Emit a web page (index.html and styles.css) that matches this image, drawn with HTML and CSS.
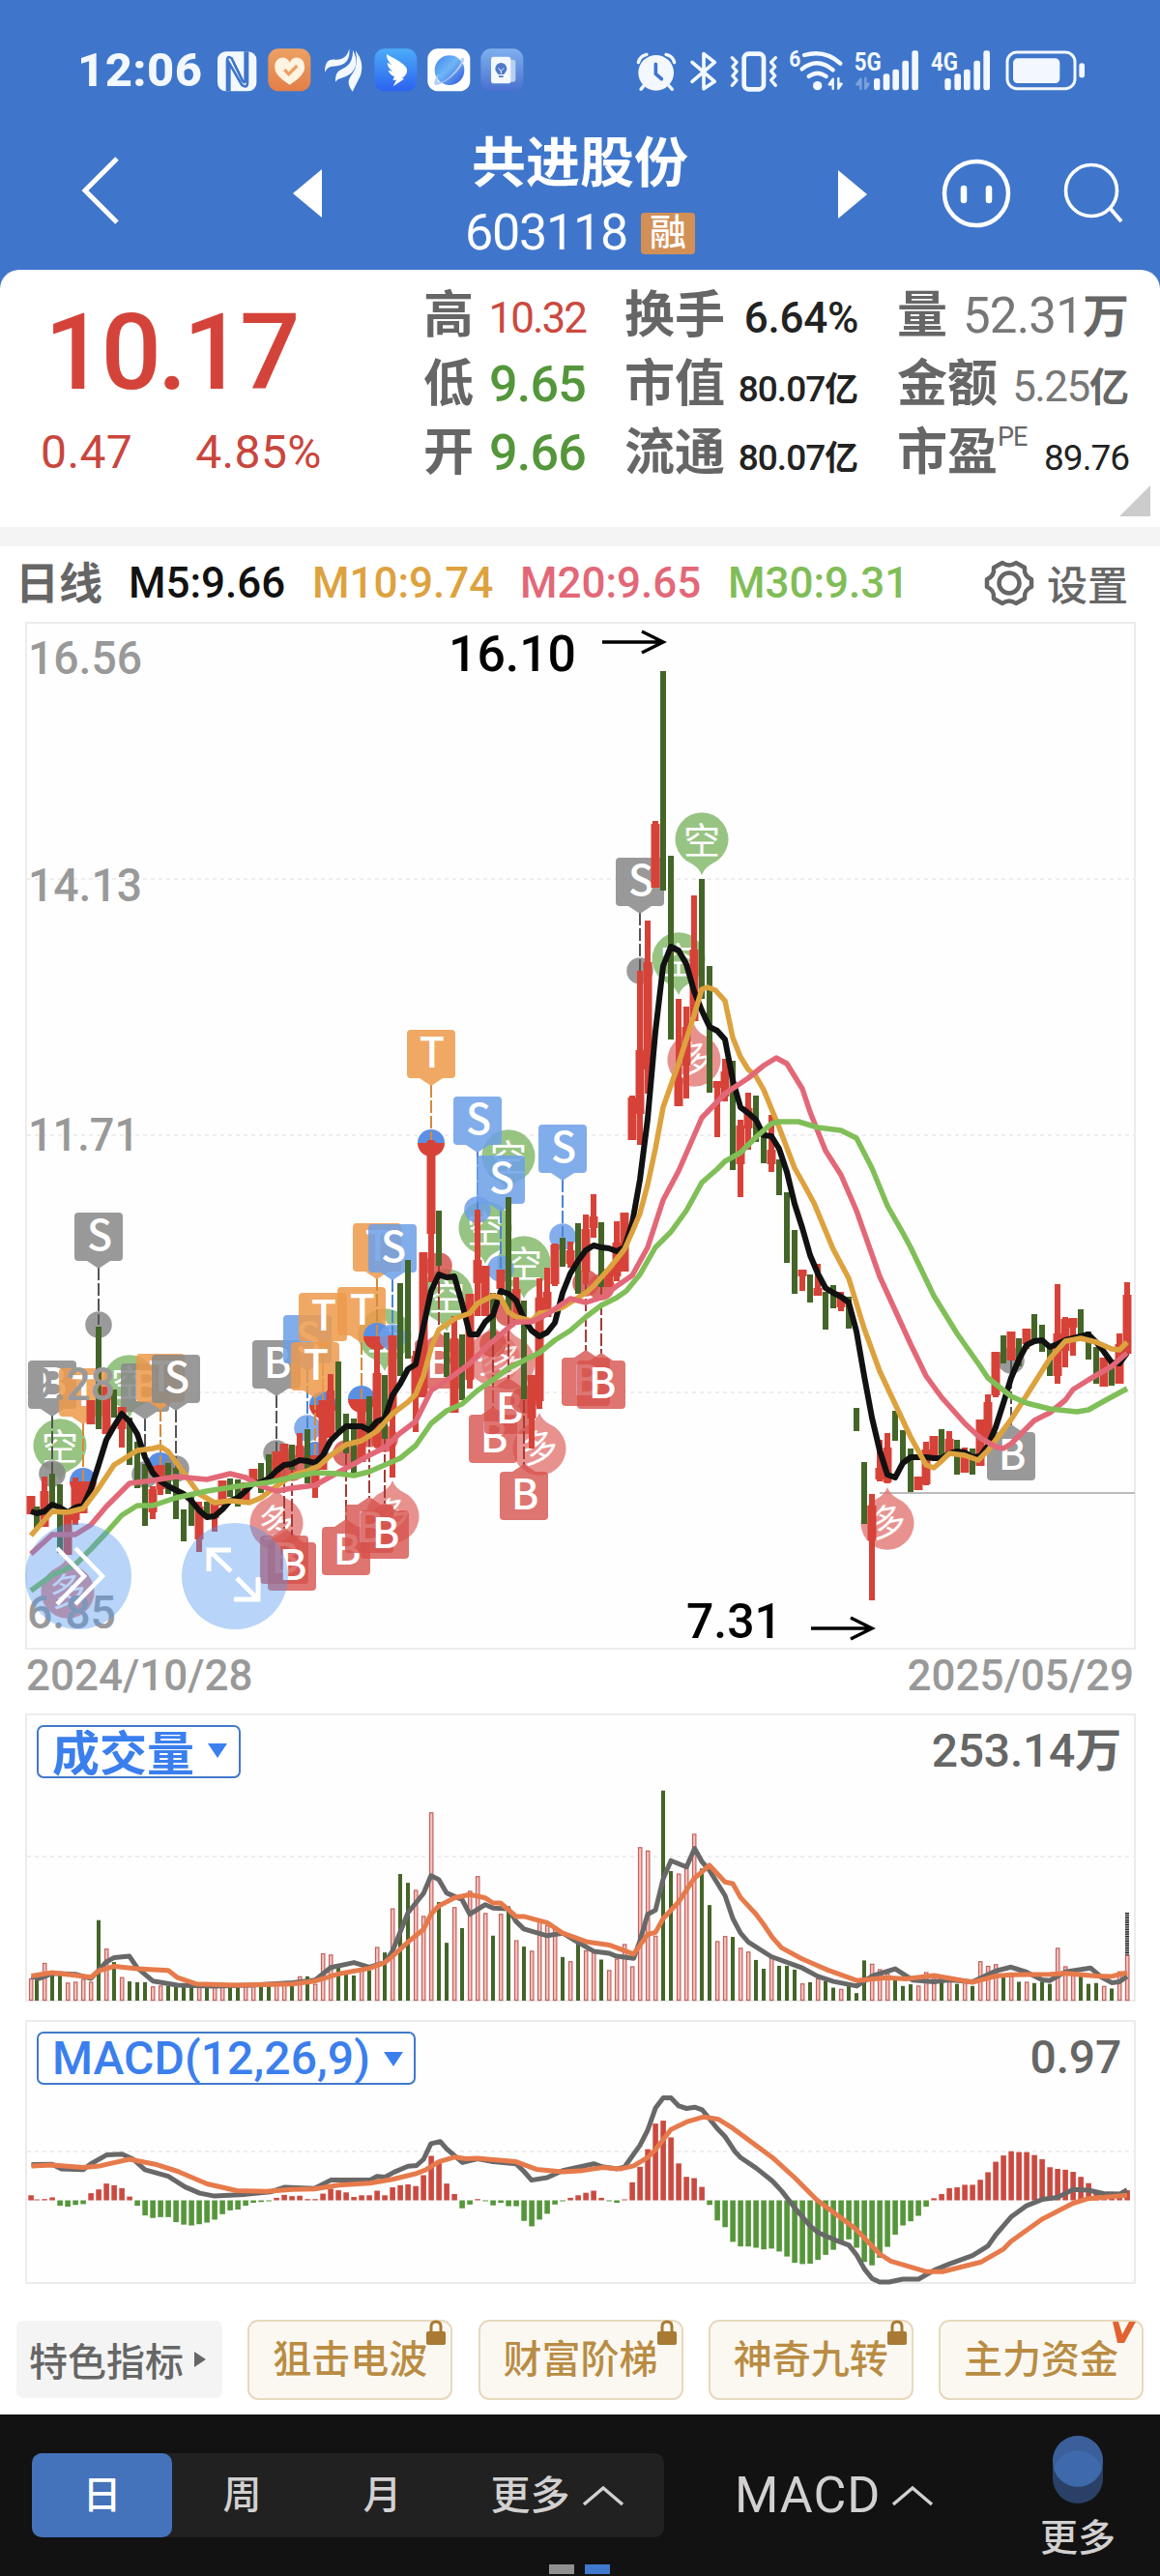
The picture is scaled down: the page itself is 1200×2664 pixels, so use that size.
FILE: index.html
```html
<!DOCTYPE html>
<html lang="zh-CN">
<head>
<meta charset="utf-8">
<title>共进股份 603118</title>
<link rel="stylesheet" href="styles.css">
</head>
<body>
<header class="top">
  <div class="status">
    <span class="clock">12:06</span>
    <svg class="status-left" width="326" height="50" viewBox="455 20 978 150">
      <defs>
        <linearGradient id="gw" x2="0" y2="1"><stop stop-color="#4cacf8"/><stop offset="1" stop-color="#2c62f0"/></linearGradient>
        <linearGradient id="gp" x2="1" y2="1"><stop stop-color="#3f86f0"/><stop offset=".45" stop-color="#6fb5f5"/><stop offset="1" stop-color="#2b50dc"/></linearGradient>
        <linearGradient id="gb" x2="0" y2="1"><stop stop-color="#7fb0ee"/><stop offset="1" stop-color="#4a70cf"/></linearGradient>
        <linearGradient id="gh" x2="0" y2="1"><stop stop-color="#eda062"/><stop offset="1" stop-color="#e27f48"/></linearGradient>
      </defs>
      <rect x="467" y="39" width="121" height="123" rx="26" fill="#f3f8ff"/>
      <path d="M497 162V66q0-16 14-6l34 70q8 10 8-4V39M504 162V76l38 66q18 14 18-8V39" fill="none" stroke="#3f76cb" stroke-width="8"/>
      <rect x="624" y="30" width="132" height="132" rx="32" fill="url(#gh)"/>
      <path d="M691 142C650 116 643 98 645 82c3-28 36-33 46-9 10-24 43-19 46 9 2 16-5 34-46 60z" fill="#fff3e2"/>
      <path d="M675 95l13 14 26-26" fill="none" stroke="#eda062" stroke-width="10"/>
      <g fill="#f3f8ff"><path d="M800 104c0-34 12-42 32-40 26 1 38-10 44-34 4 42-20 52-40 54-20 1-28 4-36 20z"/><path d="M833 133c0-36 14-35 30-45 20-12 24-32 24-53 18 32 12 60-12 76-18 12-30 8-42 22z"/><path d="M886 163c-18-26-14-36 0-56 15-22 15-44 9-71 20 26 24 48 16 77z"/></g>
      <rect x="954" y="30" width="132" height="132" rx="32" fill="url(#gw)"/>
      <path d="M992 47c30 18 54 28 62 44 4 12-2 22-14 30l6 3-34 23 10-20h-11l5-10c-12-6-16-12-19-20l13 3c-11-9-16-17-16-27l14 8c-12-14-17-22-16-34z" fill="#fff"/>
      <rect x="1119" y="30" width="132" height="132" rx="32" fill="#fff"/>
      <circle cx="1187" cy="97" r="46" fill="url(#gp)"/>
      <path d="M1222 60c18-8 12 16-14 43-28 29-65 48-68 36-2-7 4-18 14-31-14 35 10 33 38 5 26-27 36-45 30-53z" fill="#b8cdf8"/>
      <rect x="1284" y="30" width="132" height="132" rx="32" fill="url(#gb)"/>
      <rect x="1350" y="64" width="42" height="69" rx="7" fill="#b9cff0"/><rect x="1316" y="55" width="61" height="83" rx="8" fill="#f3f8ff"/>
      <circle cx="1347" cy="92" r="18" fill="#4f79ca"/><path d="M1338 104h18v6h-18zM1340 114h14v5h-14z" fill="#4f79ca"/><path d="M1338 90l9 9 9-9M1347 98v10" stroke="#f3f8ff" stroke-width="3" fill="none"/>
    </svg>
    <svg class="status-right" width="470" height="50" viewBox="50 20 1410 150" fill="none" stroke="#f3f8ff" stroke-width="11" stroke-linecap="round" stroke-linejoin="round">
      <circle cx="118" cy="105" r="55" fill="#f3f8ff" stroke="none"/>
      <path d="M63 73q4-20 26-25M175 73q-4-20-26-25M80 145l-9 11M158 145l10 11" stroke-width="10"/>
      <path d="M117 78v30l18 16" stroke="#3f76cb" stroke-width="11"/>
      <path d="M230 72l70 60-34 22V46l34 26-70 60"/>
      <rect x="391" y="46" width="61" height="110" rx="14" stroke-width="14"/>
      <path d="M354 58l14 14-12 14 12 14-12 14 12 14-14 16M489 58l-14 14 12 14-12 14 12 14-12 14 14 16" stroke-width="10"/>
      <path d="M578 50q65-18 112 26M571 93q48-38 96 3M592 116q27-20 54 0" stroke-width="13"/>
      <circle cx="619" cy="145" r="14" fill="#f3f8ff" stroke="none"/>
      <path d="M667 155v-31l-12 17h10M684 122v32l10-15h-8" stroke-width="7"/>
      <path d="M753 155v-31l-12 17h10M768 122v32l10-15h-8" stroke-width="7" opacity=".35"/>
      <g fill="#f3f8ff" stroke="none"><rect x="794" y="122" width="19" height="37" rx="7"/><rect x="823" y="108" width="20" height="51" rx="7"/><rect x="852" y="94" width="20" height="65" rx="7"/><rect x="882" y="67" width="20" height="92" rx="7"/><rect x="912" y="36" width="20" height="123" rx="7"/>
      <rect x="1014" y="122" width="19" height="37" rx="7"/><rect x="1044" y="108" width="20" height="51" rx="7"/><rect x="1073" y="94" width="20" height="65" rx="7"/><rect x="1104" y="67" width="20" height="92" rx="7"/><rect x="1134" y="36" width="20" height="123" rx="7"/>
      <rect x="1226" y="60" width="145" height="77" rx="14"/><rect x="1431" y="75" width="17" height="45" rx="8"/>
      <g class="net"><text x="531" y="85" font-size="70" textLength="36" lengthAdjust="spacingAndGlyphs">6</text><text x="733" y="97" font-size="80" textLength="84" lengthAdjust="spacingAndGlyphs">5G</text><text x="971" y="97" font-size="80" textLength="84" lengthAdjust="spacingAndGlyphs">4G</text></g></g>
      <rect x="1208" y="41" width="210" height="113" rx="30" stroke-width="9"/>
    </svg>
  </div>
  <nav class="nav">
    <svg class="back" width="48" height="74" viewBox="0 0 48 74"><path d="M40 4L7 37l33 33" fill="none" stroke="#fff" stroke-width="5"/></svg>
    <svg class="prev" width="30" height="50" viewBox="0 0 30 50"><path d="M30 0v50L0 25z" fill="#fff"/></svg>
    <div class="title"><h1>共进股份</h1><div class="code"><span>603118</span><b>融</b></div></div>
    <svg class="next" width="30" height="50" viewBox="0 0 30 50"><path d="M0 0v50l30-25z" fill="#fff"/></svg>
    <svg class="face" width="74" height="74" viewBox="0 0 74 74"><circle cx="37" cy="37" r="33" fill="none" stroke="#fff" stroke-width="4.5"/><path d="M24 32v12M50 32v12" stroke="#fff" stroke-width="6.500" stroke-linecap="round"/></svg>
    <svg class="search" width="66" height="66" viewBox="0 0 66 66"><circle cx="31" cy="31" r="26.500" fill="none" stroke="#fff" stroke-width="3.600"/><path d="M50 49l12 14" stroke="#fff" stroke-width="4"/></svg>
  </nav>
</header>

<section class="quote">
  <div class="price"><strong>10.17</strong><p><span>0.47</span><span>4.85%</span></p></div>
  <div class="stats">
    <div><b>高</b><span class="red m">10.32</span></div><div><b>换手</b><span class="dark m w rate">6.64%</span></div><div><b>量</b><span class="l">52.31<i>万</i></span></div>
    <div><b>低</b><span class="green l">9.65</span></div><div><b>市值</b><span class="dark s w">80.07<i>亿</i></span></div><div><b>金额</b><span class="m">5.25<i>亿</i></span></div>
    <div><b>开</b><span class="green l">9.66</span></div><div><b>流通</b><span class="dark s w">80.07<i>亿</i></span></div><div><b>市盈<sup>PE</sup></b><span class="dark s">89.76</span></div>
  </div>
  <i class="corner"></i>
</section>

<section class="legend">
  <b>日线</b><span class="ma5">M5:9.66</span><span class="ma10">M10:9.74</span><span class="ma20">M20:9.65</span><span class="ma30">M30:9.31</span>
  <svg class="gear" width="52" height="52" viewBox="0 0 52 52" fill="none" stroke="#666" stroke-width="4.500" stroke-linejoin="round"><path d="M19 5q7 5 14 0l9 5q-1 9 7 12v8q-8 3-7 12l-9 5q-7-5-14 0l-9-5q1-9-7-12v-8q8-3 7-12z"/><circle cx="26" cy="26" r="10.500"/></svg>
  <span class="settings">设置</span>
</section>

<svg id="kline" class="chart" width="1200" height="1070" viewBox="0 640 1200 1070"></svg>
<div class="dates"><span>2024/10/28</span><span>2025/05/29</span></div>
<section class="panel vol">
  <svg id="volume" class="chart" width="1200" height="302" viewBox="0 1770 1200 302"></svg>
  <div class="panel-head"><button>成交量<i></i></button><span>253.14<em>万</em></span></div>
</section>
<section class="panel macd">
  <svg id="macd" class="chart" width="1200" height="277" viewBox="0 2087 1200 277"></svg>
  <div class="panel-head"><button class="en">MACD(12,26,9)<i></i></button><span>0.97</span></div>
</section>

<section class="tools">
  <div class="more">特色指标<i></i></div>
  <div class="tool">狙击电波<svg class="lock" width="20" height="26" viewBox="0 0 20 26"><path d="M5 12V7q0-5 5-5t5 5v5" fill="none" stroke="#a97a33" stroke-width="3"/><rect y="12" width="20" height="14" rx="2" fill="#a97a33"/></svg></div>
  <div class="tool">财富阶梯<svg class="lock" width="20" height="26" viewBox="0 0 20 26"><path d="M5 12V7q0-5 5-5t5 5v5" fill="none" stroke="#a97a33" stroke-width="3"/><rect y="12" width="20" height="14" rx="2" fill="#a97a33"/></svg></div>
  <div class="tool">神奇九转<svg class="lock" width="20" height="26" viewBox="0 0 20 26"><path d="M5 12V7q0-5 5-5t5 5v5" fill="none" stroke="#a97a33" stroke-width="3"/><rect y="12" width="20" height="14" rx="2" fill="#a97a33"/></svg></div>
  <div class="tool">主力资金<svg class="vip" width="24" height="22" viewBox="0 0 24 22"><path d="M0 0h6l4 13 7-13h7L12 22H5z" fill="#e26330"/></svg></div>
</section>

<footer class="bar">
  <div class="segment"><span class="on">日</span><span>周</span><span>月</span><span class="wide">更多<svg width="44" height="22" viewBox="0 0 44 22"><path d="M2 20L22 3l20 17" fill="none" stroke="#d2d0d0" stroke-width="3.500"/></svg></span></div>
  <div class="indicator">MACD<svg width="44" height="22" viewBox="0 0 44 22"><path d="M2 20L22 3l20 17" fill="none" stroke="#d2d0d0" stroke-width="3.500"/></svg></div>
  <div class="toggle"><svg width="54" height="72" viewBox="0 0 54 72"><rect x="1" y="1" width="52" height="70" rx="26" fill="#2a4067"/><circle cx="27" cy="27" r="26" fill="#3b5f9a"/><path d="M2 35a26 26 0 0 1 50 0a26 26 0 0 1-50 0" fill="#3e69aa"/></svg><span>更多</span></div>
  <div class="dots"><i></i><i></i></div>
</footer>
<script src="chart.js"></script>
</body>
</html>
```
FILE: styles.css
```css
* { box-sizing: border-box; }
body { margin: 0; width: 1200px; height: 2664px; overflow: hidden; background: #fff; color: #666; font-family: Roboto, "Noto Sans CJK SC", sans-serif; }
h1, p { margin: 0; }
i, em { font-style: normal; }
svg { display: block; flex: none; }
.top { height: 300px; background: #3f76cb; color: #fff; }
.status { height: 113px; display: flex; align-items: flex-start; padding-left: 80px; padding-top: 47px; }
.clock { width: 141px; font-size: 49px; line-height: 52px; font-weight: 800; letter-spacing: 0.4px; color: #f3f8ff; }
.status-right { margin-left: 109px; }
.net { font-family: Roboto, sans-serif; font-weight: 700; }
.nav { height: 166px; display: flex; align-items: flex-start; padding-left: 81px; }
.back { margin-top: 47px; }
.prev { margin: 62px 0 0 174px; }
.title { width: 534px; text-align: center; padding-top: 17px; }
.title h1 { font-size: 56px; line-height: 78px; font-weight: 700; }
.code { display: flex; justify-content: center; align-items: center; gap: 14px; height: 60px; margin-top: 3px; font-size: 52px; letter-spacing: -1.2px; line-height: 60px; }
.code b { width: 56px; height: 43px; border-radius: 4px; background: #d29057; font-size: 38px; line-height: 40px; font-weight: 500; letter-spacing: 0; }
.next { margin-top: 63px; }
.face { margin: 50px 0 0 76px; }
.search { margin: 53px 0 0 51px; }
.quote { position: relative; height: 266px; margin-top: -21px; background: #fff; border-radius: 20px 20px 0 0; display: flex; padding-top: 12px; }
.price { width: 438px; color: #d4433a; }
.price strong { display: block; padding: 14px 0 0 46px; font-size: 110px; line-height: 120px; font-weight: 500; letter-spacing: -4px; }
.price p { display: flex; gap: 65px; padding-left: 42px; margin-top: 15px; font-size: 48px; line-height: 56px; color: #c9463d; letter-spacing: .4px; }
.stats { display: grid; grid-template-columns: 168px 242px 240px; column-gap: 40px; grid-template-rows: repeat(3, 71px); }
.stats div { display: flex; justify-content: space-between; align-items: baseline; height: 71px; line-height: 71px; white-space: nowrap; }
.stats b { font-size: 52px; font-weight: 700; }
.stats sup { display: inline-block; font: 400 27px/30px Roboto, sans-serif; vertical-align: 25px; letter-spacing: -1px; margin-right: -10px; }
.stats span { color: #777; letter-spacing: -1.6px; }
.stats .l { font-size: 51px; letter-spacing: -.8px; }
.stats .l.green { font-size: 52px; font-weight: 500; letter-spacing: -.8px; }
.stats .m { font-size: 44px; }
.stats .s { font-size: 37px; letter-spacing: -1px; }
.stats .w { font-weight: 500; }
.stats .rate { letter-spacing: -.3px; }
.stats i { font-weight: 600; color: #666; letter-spacing: 0; font-size: .94em; }
.stats .dark i { color: #222; }
.stats .red { color: #cb4940; letter-spacing: -2px; }
.stats .green { color: #54963a; }
.stats .dark { color: #222; }
.corner { position: absolute; right: 10px; top: 223px; border: 16px solid #ccc; border-left-color: transparent; border-top-color: transparent; }
.legend { height: 95px; border-top: 20px solid #f4f4f4; display: flex; align-items: center; padding-left: 16px; font-size: 44px; font-weight: 500; white-space: nowrap; }
.legend b { width: 117px; font-size: 45px; padding-bottom: 5px; }
.ma5 { width: 190px; color: #111; }
.ma10 { width: 215px; color: #dda23e; }
.ma20 { width: 215px; color: #e36877; }
.ma30 { width: 265px; color: #80bd57; }
.settings { margin-left: 13px; font-size: 42px; }
.chart { font-family: Roboto, "Noto Sans CJK SC", sans-serif; }
.dates { height: 60px; display: flex; justify-content: space-between; padding: 0 27px; font-size: 44px; line-height: 46px; font-weight: 500; color: #999; }
.panel { position: relative; }
.vol { margin-bottom: 15px; }
.panel-head { position: absolute; left: 38px; right: 40px; top: 14px; display: flex; justify-content: space-between; font-size: 48px; line-height: 53px; font-weight: 500; letter-spacing: -.2px; }
.panel-head button { height: 55px; width: 211px; border: 2px solid #4179cb; border-radius: 7px; background: #fff; color: #3b7fee; font: 700 49px/44px "Noto Sans CJK SC", sans-serif; padding: 0 0 4px 14px; display: flex; align-items: center; white-space: nowrap; }
.panel-head button i { margin: 2px 0 0 14px; border: 10px solid transparent; border-top: 15px solid #3b7fee; border-bottom: 0; }
.panel-head button.en { width: 392px; padding-bottom: 0; font: 500 48px/50px Roboto, sans-serif; letter-spacing: .1px; }
.panel-head em { font-weight: 700; }
.tools { height: 133px; padding: 35px 17px 0; display: flex; justify-content: space-between; align-items: flex-start; font-size: 40px; font-weight: 500; }
.more { display: flex; align-items: center; gap: 11px; width: 213px; height: 80px; margin-top: 1px; padding-left: 13px; background: #f4f4f4; border-radius: 7px; white-space: nowrap; }
.more i { border: 8px solid transparent; border-left: 12px solid #666; border-right: 0; }
.tool { position: relative; width: 212px; height: 83px; border: 2px solid #e7d9bd; border-radius: 11px; background: #fbf8f2; color: #b98c43; text-align: center; line-height: 80px; }
.lock { position: absolute; right: 5px; top: -2px; }
.vip { position: absolute; right: 6px; top: 0; }
.bar { position: relative; height: 167px; background: #121212; color: #d2d0d0; display: flex; font-size: 40px; font-weight: 500; padding-left: 33px; }
.segment { margin-top: 40px; width: 654px; height: 87px; display: flex; border-radius: 10px; background: #212121; line-height: 88px; text-align: center; }
.segment span { width: 145px; }
.segment .on { border-radius: 10px; background: #4472bb; color: #fff; }
.segment .wide { width: 219px; display: flex; align-items: center; justify-content: center; gap: 12px; font-size: 41px; padding-right: 2px; }
.indicator { width: 280px; margin: 40px 0 0 73px; height: 87px; display: flex; align-items: center; gap: 11px; font: 400 52px Roboto, sans-serif; letter-spacing: 1px; }
.toggle { margin: 21px 0 0 30px; width: 90px; display: flex; flex-direction: column; align-items: center; font-size: 39px; line-height: 70px; }
.dots { position: absolute; left: 568px; bottom: 2px; display: flex; gap: 11px; }
.dots i { width: 26px; height: 10px; background: #909090; }
.dots i + i { background: #3f78cc; }
```
FILE: chart.js
```js
const SVG = "http://www.w3.org/2000/svg";
const RED = "#d64238", GREEN = "#446528", GREY = "#949494";
const X = i => (i === 0 ? 32 : 30 + 8 * i);

function add(parent, tag, attrs, text) {
  const node = document.createElementNS(SVG, tag);
  for (const k in attrs) node.setAttribute(k, attrs[k]);
  if (text !== undefined) node.textContent = text;
  parent.appendChild(node);
  return node;
}
function frame(svg, top, bottom, grid) {
  add(svg, "rect", { x: 27, y: top, width: 1147, height: bottom - top, fill: "#fefefe", stroke: "#ececec", "stroke-width": 2 });
  for (const y of grid) add(svg, "path", { d: `M28 ${y}H1173`, stroke: "#e9e9e9", "stroke-width": 1.5, "stroke-dasharray": "4 4" });
}
function line(svg, d, color, width) {
  add(svg, "polyline", { points: d, fill: "none", stroke: color, "stroke-width": width, "stroke-linejoin": "round" });
}
function label(svg, x, y, w, size, color, text, weight = 500) {
  add(svg, "text", { x, y, "font-size": size, fill: color, "font-weight": weight, textLength: w, lengthAdjust: "spacingAndGlyphs" }, text);
}

/* high, low, then body top and bottom when the wick is visible */
const candles = `r1547,1566 g1558,1581 r1527,1579,1542,1579 g1524,1555 g1535,1606 r1565,1608 r1528,1577,1532,1572 r1532,1565 r1448,1473 g1372,1478
r1434,1483 g1437,1466 r1455,1497,1455,1478 g1466,1515 g1491,1539 g1514,1578 r1537,1571,1540,1564 r1515,1546,1515,1540 g1513,1545 g1518,1571
g1561,1594 g1546,1578 r1553,1605,1558,1592 g1553,1569 r1555,1584,1555,1570 r1531,1557 g1529,1548 g1530,1558 r1533,1555 r1519,1532
g1513,1544 g1504,1532 r1501,1530 r1493,1518 g1494,1520 r1482,1507,1495,1507 g1478,1534 r1505,1549,1507,1538 r1448,1520 r1421,1487,1438,1487
g1408,1480 g1462,1503 g1467,1525 r1447,1512 g1444,1483 r1382,1497,1420,1495 g1422,1488 r1381,1528,1381,1463 g1327,1423 g1303,1405
r1397,1481,1402,1445 r1295,1445 r1179,1326,1180,1276 g1252,1309 g1378,1424 r1361,1461,1384,1461 g1380,1448 r1338,1436,1338,1427 r1251,1361,1303,1327 r1309,1361
g1337,1388 r1313,1333 g1238,1358 r1321,1370,1333,1348 g1345,1447 r1422,1498,1422,1467 r1322,1457,1342,1449 r1311,1362,1336,1362 r1286,1330,1287,1328 g1280,1310
r1284,1311,1293,1307 g1265,1338 r1256,1328,1271,1315 r1235,1280,1258,1270 g1264,1331 r1312,1331 r1263,1325,1285,1320 r1254,1315 r1133,1179,1135,1179 r1004,1184,1086,1152
r952,1131,995,1106 r849,918,852,918 g694,921 g885,1075 r1033,1144,1115,1144 r1041,1136,1062,1102 r926,1056,982,1056 g909,1033 g999,1130 r1118,1176,1118,1125
r1095,1139,1108,1134 g1097,1210 r1158,1238,1164,1204 r1130,1189,1146,1167 g1133,1181 g1169,1203 r1153,1212,1189,1204 g1199,1236 g1233,1306 g1272,1338
r1313,1335,1313,1320 g1318,1347 r1307,1340,1332,1340 g1336,1375 g1329,1353 r1336,1356,1340,1352 g1341,1374 g1456,1480 g1512,1576 r1545,1655,1557,1593
r1489,1532,1518,1530 r1482,1534,1497,1533 g1459,1490 g1479,1513 g1498,1543 r1527,1541 r1491,1536,1499,1535 r1485,1510 g1478,1507 r1480,1503,1488,1503
g1489,1525 r1497,1523,1501,1523 g1498,1525 r1468,1516 r1442,1493,1450,1487 r1398,1445,1398,1443 g1381,1410 r1377,1407 g1384,1413 r1374,1395,1374,1390
g1359,1387 g1370,1398 g1393,1423 r1328,1431,1379,1423 r1362,1414,1364,1397 r1363,1402,1363,1373 g1354,1383 g1377,1406 g1393,1431 r1404,1434
g1410,1433 r1379,1431,1390,1431 r1326,1400,1339,1400`.split(/\s+/).map(s => ({ up: s[0] === "r", v: s.slice(1).split(",").map(Number) }));

const ma5y = [1563,1565,1563,1556,1559,1564,1559,1557,1540,1515,1489,1475,1462,1470,1483,1507,1523,1532,1537,1541,1545,1552,1562,1569,1568,1561,1552,1549,1542,1534,1533,1529,1521,1515,1514,1510,1511,1513,1505,1490,1482,1475,1475,1475,1479,1470,1467,1443,1431,1416,1411,1372,1335,1318,1321,1320,1348,1380,1380,1367,1360,1335,1338,1345,1364,1376,1382,1378,1368,1337,1317,1304,1293,1288,1290,1291,1294,1290,1265,1220,1157,1067,999,979,983,997,1025,1045,1062,1066,1075,1117,1145,1151,1158,1174,1175,1188,1212,1245,1270,1298,1317,1332,1337,1341,1347,1377,1423,1466,1500,1525,1528,1513,1507,1507,1507,1508,1508,1503,1501,1502,1507,1506,1495,1476,1451,1425,1406,1391,1387,1386,1393,1390,1386,1384,1382,1380,1388,1398,1409,1410,1399];
const ma10 = "32,1588 38,1581 54,1563 70,1564 86,1560 102,1539 118,1515 126,1510 142,1500 158,1498 166,1496 174,1501 190,1523 206,1545 222,1554 238,1552 258,1554 270,1549 286,1537 302,1526 318,1521 330,1516 342,1505 358,1494 374,1490 390,1480 406,1462 422,1450 430,1442 438,1423 446,1394 454,1375 470,1364 486,1358 494,1348 510,1340 518,1342 526,1357 534,1362 550,1366 558,1358 566,1357 582,1352 598,1342 606,1337 614,1330 630,1312 646,1292 654,1274 662,1255 670,1225 678,1188 686,1145 702,1100 718,1050 726,1023 732,1021 740,1024 750,1035 758,1073 766,1093 774,1106 782,1113 790,1127 806,1166 822,1208 830,1222 842,1244 862,1292 878,1322 894,1374 910,1418 926,1452 942,1486 958,1515 966,1518 974,1511 982,1503 998,1505 1012,1510 1022,1500 1046,1468 1062,1443 1086,1405 1102,1387 1118,1384 1134,1388 1150,1395 1158,1396 1166,1388";
const ma20 = "32,1607 54,1587 78,1587 94,1577 110,1558 134,1534 158,1531 182,1527 214,1530 238,1524 254,1528 270,1537 286,1542 302,1539 326,1536 342,1527 366,1514 382,1505 398,1497 414,1482 430,1470 446,1438 470,1422 486,1410 502,1394 526,1373 534,1367 550,1367 566,1359 590,1343 606,1347 622,1342 638,1330 654,1319 670,1290 686,1241 702,1211 726,1156 750,1131 774,1115 790,1102 803,1094 814,1100 830,1126 838,1150 854,1190 870,1215 886,1252 910,1320 926,1355 942,1390 958,1423 974,1445 998,1472 1014,1487 1030,1496 1038,1498 1046,1493 1070,1469 1086,1461 1102,1448 1110,1437 1126,1427 1150,1413 1166,1399";
const ma30 = "32,1645 54,1629 78,1618 94,1602 110,1585 126,1567 142,1557 158,1557 182,1549 214,1542 246,1537 278,1533 310,1526 326,1523 350,1524 366,1526 382,1522 398,1515 414,1508 430,1495 446,1472 462,1459 478,1452 494,1438 510,1427 526,1415 542,1407 558,1399 574,1386 590,1376 606,1362 622,1350 638,1342 648,1335 662,1318 678,1290 694,1274 710,1252 726,1223 742,1209 750,1201 766,1192 782,1176 798,1162 806,1160 826,1160 846,1166 870,1169 886,1177 902,1208 918,1247 934,1275 942,1290 966,1340 990,1379 1014,1413 1022,1425 1046,1444 1062,1451 1086,1457 1114,1460 1126,1458 1142,1449 1166,1436";

/* trade flags: letter, colour, x, box top, y of the marked price */
const flags = [
  ["B", "grey", 54, 1407, 1524], ["T", "orange", 86, 1415, 1532], ["S", "grey", 102, 1254, 1370], ["B", "grey", 150, 1410, 1525],
  ["T", "orange", 166, 1400, 1516], ["S", "grey", 182, 1401, 1519], ["B", "grey", 286, 1386, 1503], ["S", "blue", 318, 1360, 1477],
  ["T", "orange", 334, 1337, 1453], ["T", "orange", 326, 1388, 1505], ["T", "orange", 374, 1331, 1447], ["T", "orange", 390, 1265, 1382],
  ["S", "blue", 406, 1266, 1383], ["T", "orange", 446, 1065, 1182], ["S", "blue", 494, 1134, 1251], ["S", "blue", 518, 1195, 1312],
  ["S", "blue", 582, 1163, 1279], ["S", "grey", 662, 887, 1004],
  ["B", "red", 294, 1588, 1515], ["B", "red", 302, 1595, 1518], ["B", "red", 358, 1579, 1503], ["B", "red", 382, 1556, 1483],
  ["B", "red", 398, 1562, 1488], ["B", "red", 454, 1386, 1309], ["B", "red", 510, 1463, 1390], ["B", "red", 526, 1433, 1358],
  ["B", "red", 542, 1522, 1448], ["B", "red", 606, 1404, 1327], ["B", "red", 622, 1407, 1331], ["B", "grey", 1046, 1481, 1407]
];
const tone = { grey: "#888888", orange: "#ee9a4c", blue: "#6e9fe8", red: "#d6524c" };
const stem = { grey: "#555", orange: "#d58a3a", blue: "#4a86d0", red: "#a53c35" };
const pins = [["空", 62, 1496], ["空", 134, 1430], ["空", 398, 1382], ["空", 502, 1271], ["空", 526, 1197], ["空", 542, 1307], ["空", 462, 1341], ["空", 726, 869], ["空", 702, 993],
  ["多", 70, 1645], ["多", 286, 1574], ["多", 406, 1567], ["多", 510, 1404], ["多", 526, 1408], ["多", 558, 1497], ["多", 718, 1095], ["多", 918, 1574]];

const k = document.getElementById("kline");
frame(k, 644, 1705, [909, 1174, 1440]);
add(k, "path", { d: "M910 1544H1174", stroke: "#bbb", "stroke-width": 2 });
for (const [ch, x, y] of pins) {
  const down = ch === "空", s = down ? 1 : -1;
  const g = add(k, "g", { opacity: down ? .86 : .78 });
  add(g, "path", { d: `M${x - 11} ${y + s * 24}Q${x - 3} ${y + s * 28} ${x} ${y + s * 36}Q${x + 3} ${y + s * 28} ${x + 11} ${y + s * 24}A27.500 27.500 0 1 ${down ? 0 : 1} ${x - 11} ${y + s * 24}Z`, fill: down ? "#88bb70" : "#e27472" });
  add(g, "text", { x, y: y + 14, "font-size": 38, "text-anchor": "middle", fill: "#fff", transform: down ? "" : `rotate(-10 ${x} ${y})` }, ch);
}
for (const [ch, color, x, top, dot] of flags) {
  const down = top < dot;
  if (ch === "T") {
    add(k, "path", { d: `M${x - 14} ${dot}a14 14 0 0 1 28 0z`, fill: "#5b8fe4" });
    add(k, "path", { d: `M${x - 14} ${dot}a14 14 0 0 0 28 0z`, fill: RED });
  } else add(k, "circle", { cx: x, cy: dot, r: 13.8, fill: tone[color], opacity: .85 });
  add(k, "path", { d: down ? `M${x} ${top + 57}V${dot}` : `M${x} ${dot}V${top - 7}`, stroke: stem[color], "stroke-width": 2, "stroke-dasharray": "13 3" });
  const g = add(k, "g", { opacity: color === "red" ? .8 : .86 });
  const tip = down ? `M${x - 12} ${top + 50}h24l-12 8z` : `M${x - 12} ${top}h24l-12-8z`;
  add(g, "path", { d: `M${x - 21} ${top}h42q4 0 4 4v42q0 4-4 4h-42q-4 0-4-4v-42q0-4 4-4z${tip}`, fill: tone[color] });
  add(k, "text", { x: x + 1, y: top + 39, "font-size": 43, "font-family": "Noto Sans CJK SC", "font-weight": 500, "text-anchor": "middle", fill: "#fff" }, ch);
}
candles.forEach((c, i) => {
  const [hi, lo, top = hi, bottom = lo] = c.v;
  add(k, "rect", { x: X(i) - 3, y: hi, width: 6, height: lo - hi, fill: c.up ? RED : GREEN });
  if (c.up) add(k, "rect", { x: X(i) - 4.5, y: top, width: 9, height: bottom - top, fill: RED });
});
line(k, ma5y.map((y, i) => X(i) + "," + y).join(" "), "#111", 6);
line(k, ma10, "#dda23e", 5.5);
line(k, ma20, "#e36877", 5.5);
line(k, ma30, "#80bf58", 5.5);
label(k, 29, 697, 118, 48, "#999", "16.56");
label(k, 29, 932, 118, 48, "#999", "14.13");
label(k, 29, 1190, 115, 48, "#999", "11.71");
label(k, 30, 1448, 89, 48, "#999", "9.28");
label(k, 28, 1684, 92, 48, "#999", "6.85");
label(k, 464, 694, 132, 52, "#000", "16.10");
label(k, 710, 1694, 99, 50, "#000", "7.31");
for (const [x, y] of [[686, 664], [902, 1684]]) add(k, "path", { d: `M${x - 63} ${y}H${x}M${x - 22} ${y - 11}L${x} ${y}l-22 11`, fill: "none", stroke: "#000", "stroke-width": 3.5 });
for (const x of [81, 243]) add(k, "circle", { cx: x, cy: 1630, r: 55, fill: "#5196f0", opacity: .4 });
add(k, "path", { d: "M59 1601l28 29-28 29M78 1601l28 29-28 29", fill: "none", stroke: "#fff", "stroke-width": 4.5 });
add(k, "path", { d: "M239 1625l-22-21M216 1625v-22h23M245 1632l22 22M242 1654h25v-23", fill: "none", stroke: "#fff", "stroke-width": 5 });

/* lower panels are measured on a finer grid of 2.613 x 2.306 units per pixel */
const UX = 2.613, UY = 2.306;
function join(left, right) {
  const put = (s, dx) => s.split(" ").map(p => { const [a, b] = p.split(",").map(Number); return ((a + dx) / UX).toFixed(1) + "," + (1700 + b / UY).toFixed(1); }).join(" ");
  return put(left, 0) + " " + put(right, 600 * UX);
}
const volumes = [53,50,90,60,62,43,45,52,45,192,124,92,56,46,44,44,34,36,35,36,34,34,34,34,34,34,34,33,36,36,38,40,37,38,36,58,58,40,113,110,80,62,60,72,72,128,115,220,302,281,264,202,449,235,138,223,173,262,297,209,155,207,225,144,129,119,193,180,170,104,94,150,120,118,98,73,100,135,82,366,358,155,501,309,303,320,398,315,228,142,154,152,126,117,97,76,105,83,83,74,41,44,53,47,31,28,35,18,96,88,75,65,50,35,39,36,68,55,48,50,40,45,35,94,83,87,60,58,45,45,42,45,40,126,82,60,60,40,42,35,29,70,109];
const v = document.getElementById("volume");
frame(v, 1773, 2069, [1920]);
volumes.forEach((n, i) => {
  const h = n / UY;
  if (candles[i].up) add(v, "rect", { x: X(i) - 1.5, y: 2069.5 - h, width: 3.4, height: h - 1, fill: "#f7c1bd", stroke: "#c0625c", "stroke-width": 1.2 });
  else add(v, "rect", { x: X(i) - 2, y: 2069 - h, width: 4, height: h, fill: GREEN });
});
add(v, "rect", { x: 1164, y: 1978, width: 4, height: 43, fill: "#aaa" });
add(v, "path", { d: "M1166 1978V2022", stroke: "#222", "stroke-width": 4, "stroke-dasharray": "1.200 1.200" });
line(v, join("85,793 105,798 141,786 204,788 246,798 288,758 309,748 350,745 371,773 413,804 480,814 580,816 680,814 790,808 852,802 894,772 957,760 998,771 1040,760 1061,733 1103,641 1145,595 1165,553 1186,562 1207,594 1249,610 1270,645 1312,622 1333,630 1374,632 1395,662 1416,680 1479,696 1521,690 1563,712",
  "37,733 79,738 99,745 145,750 162,708 183,645 204,635 225,560 246,517 288,532 310,488 330,520 350,540 392,600 413,655 434,690 455,711 517,746 601,773 643,793 685,805 748,816 790,792 852,775 900,802 957,806 998,801 1061,806 1124,780 1165,771 1207,783 1249,801 1270,803 1312,782 1380,773 1410,795 1437,808 1458,806 1479,793"), "#686868", 5);
line(v, join("85,792 141,784 246,795 267,780 309,769 371,775 455,779 480,796 530,811 640,814 790,811 852,804 915,787 998,774 1040,760 1061,745 1103,711 1145,681 1165,645 1186,625 1228,606 1270,598 1312,606 1333,618 1353,618 1395,650 1416,650 1479,665 1521,690 1568,705",
  "20,711 79,718 145,740 183,693 204,688 225,655 267,615 308,560 350,528 392,568 413,572 434,605 476,645 497,670 520,700 545,725 600,751 670,778 748,803 830,796 880,799 957,791 1061,807 1124,792 1165,789 1270,788 1312,786 1395,792 1437,793 1479,784"), "#e77a4b", 5);

const bars = [12,1,3,7,-13,-15,-11,-9,17,26,40,36,29,9,-13,-36,-42,-40,-40,-52,-58,-60,-57,-53,-46,-33,-24,-22,-13,-6,-4,-1,6,13,10,11,3,3,16,28,24,19,8,12,12,23,12,31,36,38,34,60,106,93,40,15,-19,-10,3,-1,-12,-6,-14,-14,-49,-62,-46,-32,-10,-1,6,12,18,23,6,-1,-6,2,43,80,122,183,190,150,88,56,53,32,-11,-48,-64,-99,-110,-110,-113,-117,-115,-122,-134,-149,-152,-151,-142,-130,-118,-100,-93,-113,-147,-155,-137,-111,-82,-60,-50,-37,-15,5,15,29,31,37,37,49,67,92,107,117,115,115,108,98,79,75,73,68,56,41,18,16,15,18,24];
const m = document.getElementById("macd");
frame(m, 2090, 2361, [2225]);
bars.forEach((n, i) => {
  const h = Math.max(Math.abs(n) / UY, 1);
  add(m, "rect", { x: X(i) - 2.7, y: n > 0 ? 2275.5 - h : 2275.5, width: 5.6, height: h, fill: n > 0 ? "#cb4a40" : "#56963b" });
});
line(m, join("85,1242 141,1241 165,1252 225,1254 246,1240 288,1219 330,1217 360,1229 392,1254 455,1270 500,1295 540,1310 580,1317 660,1313 730,1307 770,1296 850,1299 894,1279 1000,1279 1019,1270 1040,1272 1065,1260 1103,1246 1126,1244 1145,1229 1165,1192 1190,1187 1207,1204 1250,1237 1291,1228 1333,1235 1395,1240 1416,1258 1437,1279 1479,1273 1521,1256 1563,1248",
  "37,1240 60,1247 100,1252 120,1248 162,1196 183,1160 204,1107 225,1083 246,1083 267,1102 288,1108 310,1105 330,1111 371,1156 392,1175 420,1212 434,1225 476,1250 520,1281 545,1305 585,1350 620,1386 643,1404 685,1420 727,1434 748,1458 769,1491 790,1514 810,1522 835,1522 873,1515 915,1515 957,1494 998,1479 1061,1459 1103,1436 1124,1409 1165,1367 1207,1340 1249,1325 1291,1320 1333,1301 1374,1303 1415,1311 1460,1312 1479,1302"), "#686868", 5);
line(m, join("85,1245 141,1243 225,1249 270,1245 350,1229 420,1241 480,1258 560,1288 640,1304 720,1306 790,1301 850,1300 915,1291 1000,1286 1061,1277 1126,1263 1150,1255 1186,1235 1228,1224 1260,1228 1291,1227 1395,1235 1450,1253 1521,1259 1568,1257",
  "60,1249 110,1252 145,1245 183,1225 204,1206 246,1158 288,1140 335,1128 375,1134 413,1155 520,1225 580,1273 640,1326 745,1395 810,1455 840,1472 935,1497 980,1497 1040,1484 1085,1474 1145,1443 1165,1425 1249,1372 1333,1334 1374,1323 1479,1315"), "#e77a4b", 5);
```
